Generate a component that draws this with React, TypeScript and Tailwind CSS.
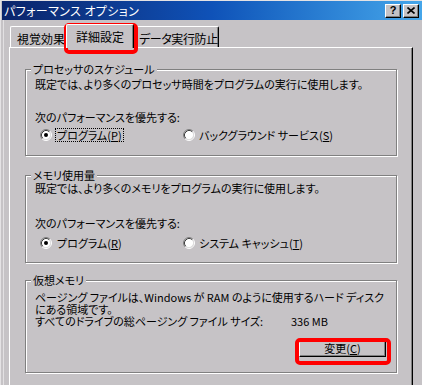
import React from "react";

const Radio = ({ checked }: { checked?: boolean }) => (
  <svg width="12" height="12" viewBox="0 0 12 12" className="shrink-0">
    <circle cx="6" cy="6" r="4.5" fill="#ffffff" />
    <path d="M2.11 9.89A5.5 5.5 0 0 1 9.89 2.11" fill="none" stroke="#808080" />
    <path d="M9.89 2.11A5.5 5.5 0 0 1 2.11 9.89" fill="none" stroke="#ffffff" />
    <path d="M2.82 9.18A4.5 4.5 0 0 1 9.18 2.82" fill="none" stroke="#404040" />
    <path d="M9.18 2.82A4.5 4.5 0 0 1 2.82 9.18" fill="none" stroke="#dfdfdf" />
    {checked && <circle cx="6" cy="6" r="2" fill="#000000" />}
  </svg>
);

const Group = ({
  label,
  className,
  children,
}: {
  label: string;
  className: string;
  children: React.ReactNode;
}) => (
  <div
    className={
      "relative flex flex-col border border-[#808080] shadow-[1px_1px_0_#ffffff,inset_1px_1px_0_#ffffff] " +
      className
    }
  >
    <span className="absolute left-[5px] top-[-7px] h-[12px] bg-[#c6c3c6] px-[2px] leading-[12px]">
      {label}
    </span>
    {children}
  </div>
);

const Key = ({ k }: { k: string }) => (
  <>
    (<span className="underline underline-offset-[1px]">{k}</span>)
  </>
);

const TitleBar = () => (
  <div className="ml-[1px] h-[19px] flex items-center justify-between bg-gradient-to-r from-[#0a246a] via-[#0f52b8] to-[#46a6ea]">
    <span className="pl-[2px] pt-[1px] text-[12px] leading-[12px] tracking-[0.4px] text-white">
      パフォーマンス オプション
    </span>
    <div className="flex gap-[2px] mr-[3px]">
      <div className="w-[16px] h-[14px] flex items-center justify-center bg-[#c6c3c6] border border-t-white border-l-white border-r-black border-b-black shadow-[inset_-1px_-1px_0_#808080] font-['Liberation_Sans',sans-serif] font-bold text-[11px] leading-[11px]">
        ?
      </div>
      <div className="w-[16px] h-[14px] flex items-center justify-center bg-[#c6c3c6] border border-t-white border-l-white border-r-black border-b-black shadow-[inset_-1px_-1px_0_#808080]">
        <svg width="8" height="7" viewBox="0 0 8 7">
          <path d="M0.5 0.5L7.5 6.5M7.5 0.5L0.5 6.5" stroke="#000" strokeWidth="1.6" />
        </svg>
      </div>
    </div>
  </div>
);

const Tabs = () => (
  <div className="h-[27px] flex items-end pl-[6px] text-[12px] leading-[12px] whitespace-nowrap">
    <div className="w-[56px] h-[21px] pt-[6px] pl-[6px] border-t border-l border-white border-r border-r-black shadow-[inset_-1px_0_0_#808080] rounded-t-[2px]">
      視覚効果
    </div>
    <div className="relative z-10 w-[68px] h-[24px] mb-[-1px] pt-[6px] text-center bg-[#c6c3c6] border-t border-l border-white border-r border-r-black shadow-[inset_-1px_0_0_#808080] rounded-t-[2px]">
      詳細設定
    </div>
    <div className="w-[85px] h-[21px] pt-[6px] pl-[4px] tracking-[-0.4px] border-t border-l border-white border-r border-r-black shadow-[inset_-1px_0_0_#808080] rounded-t-[2px]">
      データ実行防止
    </div>
  </div>
);

export default function App() {
  return (
    <div className="relative w-[422px] h-[385px] overflow-hidden bg-[#c6c3c6] border-t border-l border-[#e4e2e4] font-['Noto_Sans_CJK_JP',sans-serif] [font-feature-settings:'palt'] text-[11px] leading-[12px] text-black">
      <TitleBar />
      <div className="ml-[2px] h-[370px] border-l border-[#e2e0e2]">
        <Tabs />
        <div className="ml-[5px] w-[404px] h-[360px] flex flex-col pl-[15px] pt-[21px] border-t border-l border-white border-r border-r-black shadow-[inset_-1px_0_0_#808080]">
          <Group label="プロセッサのスケジュール" className="w-[372px] h-[87px] pl-[9px] pt-[8px]">
            <p className="h-[12px]">既定では、より多くのプロセッサ時間をプログラムの実行に使用します。</p>
            <p className="h-[12px] mt-[21px]">次のパフォーマンスを優先する:</p>
            <div className="mt-[5px] flex items-center h-[14px]">
              <div className="w-[143px] ml-[5px] flex items-center">
                <Radio checked />
                <span className="ml-[3px] px-[1px] h-[14px] border border-dotted border-black leading-[12px]">
                  プログラム<Key k="P" />
                </span>
              </div>
              <div className="flex items-center">
                <Radio />
                <span className="ml-[4px]">
                  バックグラウンド サービス<Key k="S" />
                </span>
              </div>
            </div>
          </Group>

          <Group label="メモリ使用量" className="mt-[19px] w-[372px] h-[88px] pl-[9px] pt-[6px]">
            <p className="h-[12px]">既定では、より多くのメモリをプログラムの実行に使用します。</p>
            <p className="h-[12px] mt-[23px]">次のパフォーマンスを優先する:</p>
            <div className="mt-[7px] flex items-center h-[14px]">
              <div className="w-[143px] ml-[5px] flex items-center">
                <Radio checked />
                <span className="ml-[4px] px-[1px]">
                  プログラム<Key k="R" />
                </span>
              </div>
              <div className="flex items-center">
                <Radio />
                <span className="ml-[4px]">
                  システム キャッシュ<Key k="T" />
                </span>
              </div>
            </div>
          </Group>

          <Group label="仮想メモリ" className="mt-[17px] w-[372px] h-[93px] pl-[9px] pt-[10px]">
            <p className="h-[12px]">ページング ファイルは、Windows が RAM のように使用するハード ディスク</p>
            <p className="h-[12px]">にある領域です。</p>
            <div className="h-[12px] flex">
              <span className="w-[256px]">すべてのドライブの総ページング ファイル サイズ:</span>
              <span>336 MB</span>
            </div>
            <button className="mt-[12px] self-end mr-[10px] w-[87px] h-[18px] flex items-center justify-center bg-[#c6c3c6] border border-t-white border-l-white border-r-black border-b-black shadow-[inset_-1px_-1px_0_#808080] text-[11px] leading-[12px]">
              変更<Key k="C" />
            </button>
          </Group>
        </div>
      </div>

      <div className="absolute left-[63px] top-[22px] w-[74px] h-[31px] border-[4px] border-[#ff0000] rounded-[5px]" />
      <div className="absolute left-[294px] top-[337px] w-[96px] h-[27px] border-[4px] border-[#ff0000] rounded-[5px]" />
    </div>
  );
}
